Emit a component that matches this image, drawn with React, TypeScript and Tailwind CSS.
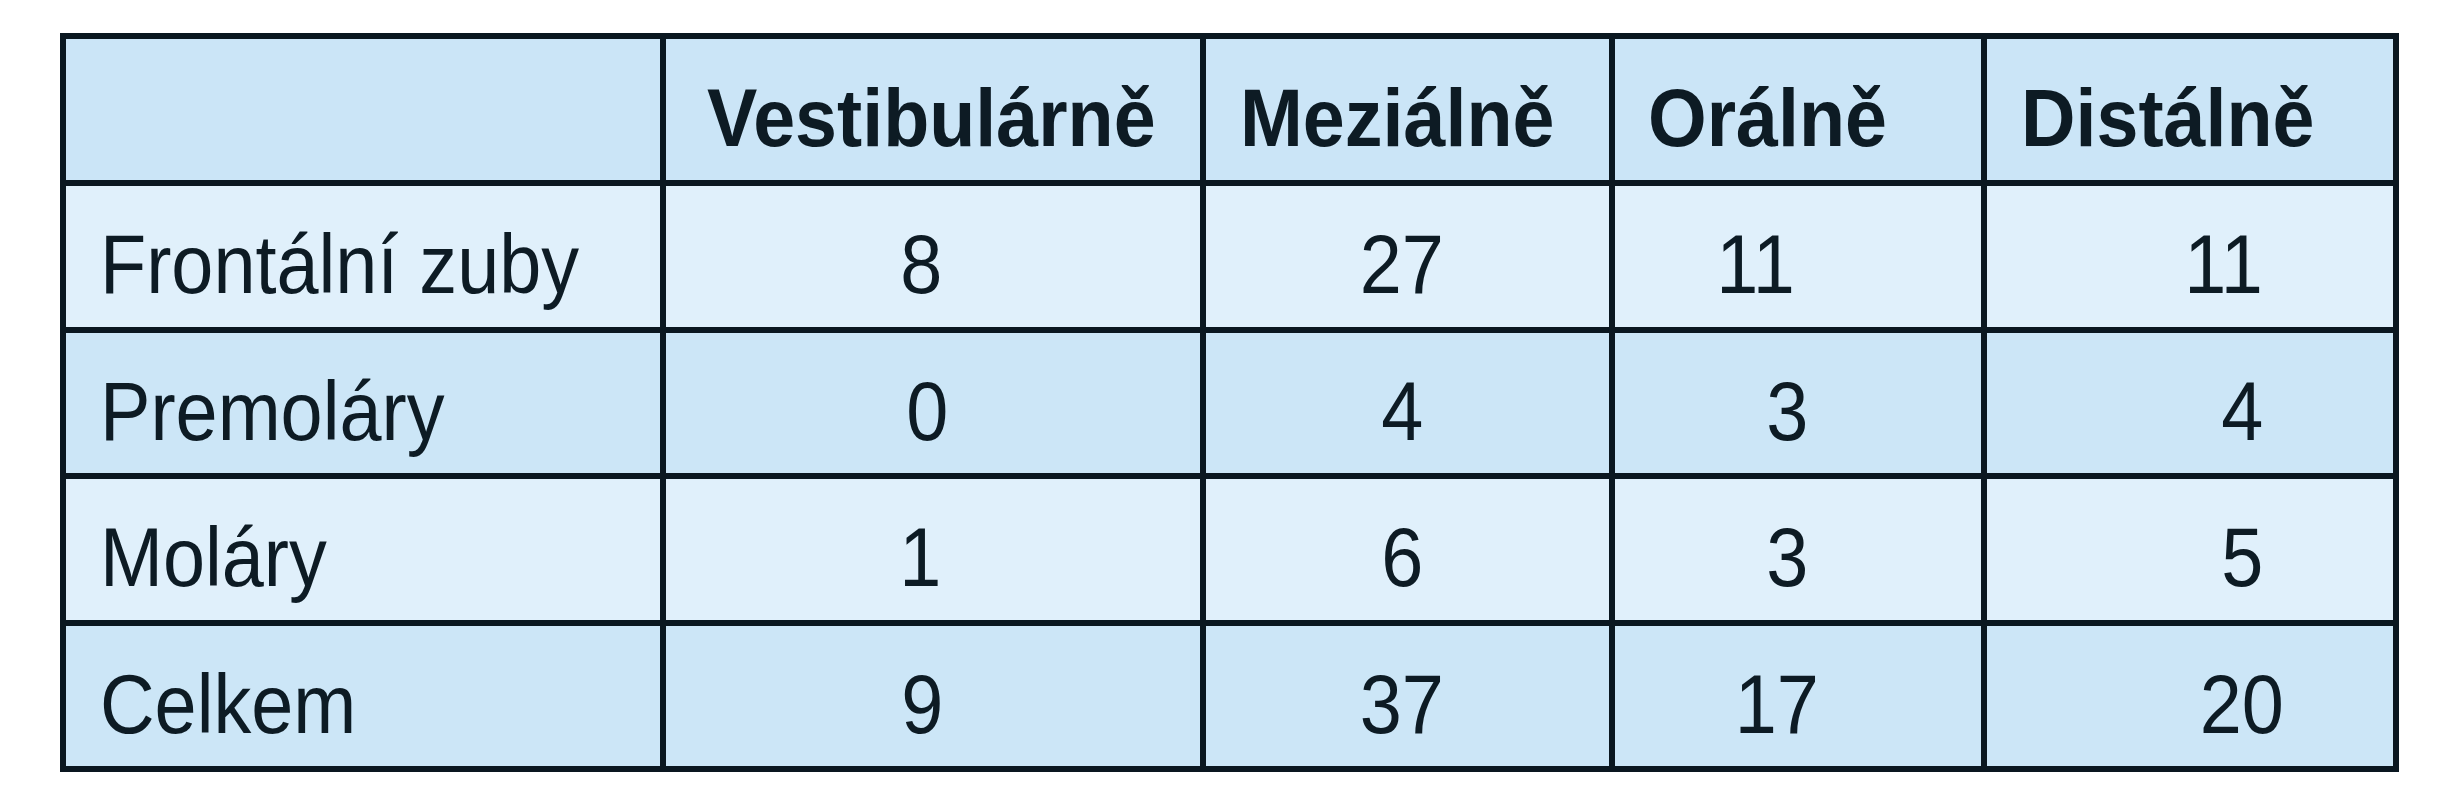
import React from "react";

type Cell = { v: string; cls: string };
type Row = { label: string; bg: string; cells: Cell[] };

const headers: { t: string; cls: string }[] = [
  { t: "Vestibulárně", cls: "pl-[41px]" },
  { t: "Meziálně", cls: "pl-[34px]" },
  { t: "Orálně", cls: "pl-[33px]" },
  { t: "Distálně", cls: "pl-[34px]" },
];

const rows: Row[] = [
  {
    label: "Frontální zuby",
    bg: "bg-[#e0f0fb]",
    cells: [
      { v: "8", cls: "pr-[24px]" },
      { v: "27", cls: "pr-[11px]" },
      { v: "11", cls: "pr-[84px]" },
      { v: "11", cls: "pl-[68px]" },
    ],
  },
  {
    label: "Premoláry",
    bg: "bg-[#cce6f7]",
    cells: [
      { v: "0", cls: "pr-[12px]" },
      { v: "4", cls: "pr-[11px]" },
      { v: "3", cls: "pr-[22px]" },
      { v: "4", cls: "pl-[104px]" },
    ],
  },
  {
    label: "Moláry",
    bg: "bg-[#e0f0fb]",
    cells: [
      { v: "1", cls: "pr-[26px]" },
      { v: "6", cls: "pr-[11px]" },
      { v: "3", cls: "pr-[22px]" },
      { v: "5", cls: "pl-[104px]" },
    ],
  },
  {
    label: "Celkem",
    bg: "bg-[#cce6f7]",
    cells: [
      { v: "9", cls: "pr-[22px]" },
      { v: "37", cls: "pr-[11px]" },
      { v: "17", cls: "pr-[42px]" },
      { v: "20", cls: "pl-[104px]" },
    ],
  },
];

export default function App() {
  return (
    <div className="w-[2460px] h-[800px] bg-white pt-[33px] pl-[60px] font-['Liberation_Sans',Arial,sans-serif] text-[#0d1b24]">
      <div className="grid w-fit grid-cols-[594px_534px_403px_366px_406px] grid-rows-[141px_141px_140px_141px_140px] gap-[6px] bg-[#0a1720] p-[6px]">
        <div className="bg-[#cbe5f7]" />
        {headers.map((h) => (
          <div
            key={h.t}
            className={`flex items-center bg-[#cbe5f7] pt-[16px] ${h.cls}`}
          >
            <span className="inline-block origin-left scale-x-[0.92] whitespace-nowrap text-[82px] font-bold leading-none">
              {h.t}
            </span>
          </div>
        ))}
        {rows.map((r) => (
          <React.Fragment key={r.label}>
            <div className={`flex items-center pl-[34px] pt-[15px] ${r.bg}`}>
              <span className="inline-block origin-left scale-x-90 whitespace-nowrap text-[84px] leading-none">
                {r.label}
              </span>
            </div>
            {r.cells.map((c, i) => (
              <div
                key={i}
                className={`flex items-center justify-center pt-[15px] ${r.bg} ${c.cls}`}
              >
                <span className="inline-block scale-x-90 whitespace-nowrap text-[84px] leading-none">
                  {c.v}
                </span>
              </div>
            ))}
          </React.Fragment>
        ))}
      </div>
    </div>
  );
}
